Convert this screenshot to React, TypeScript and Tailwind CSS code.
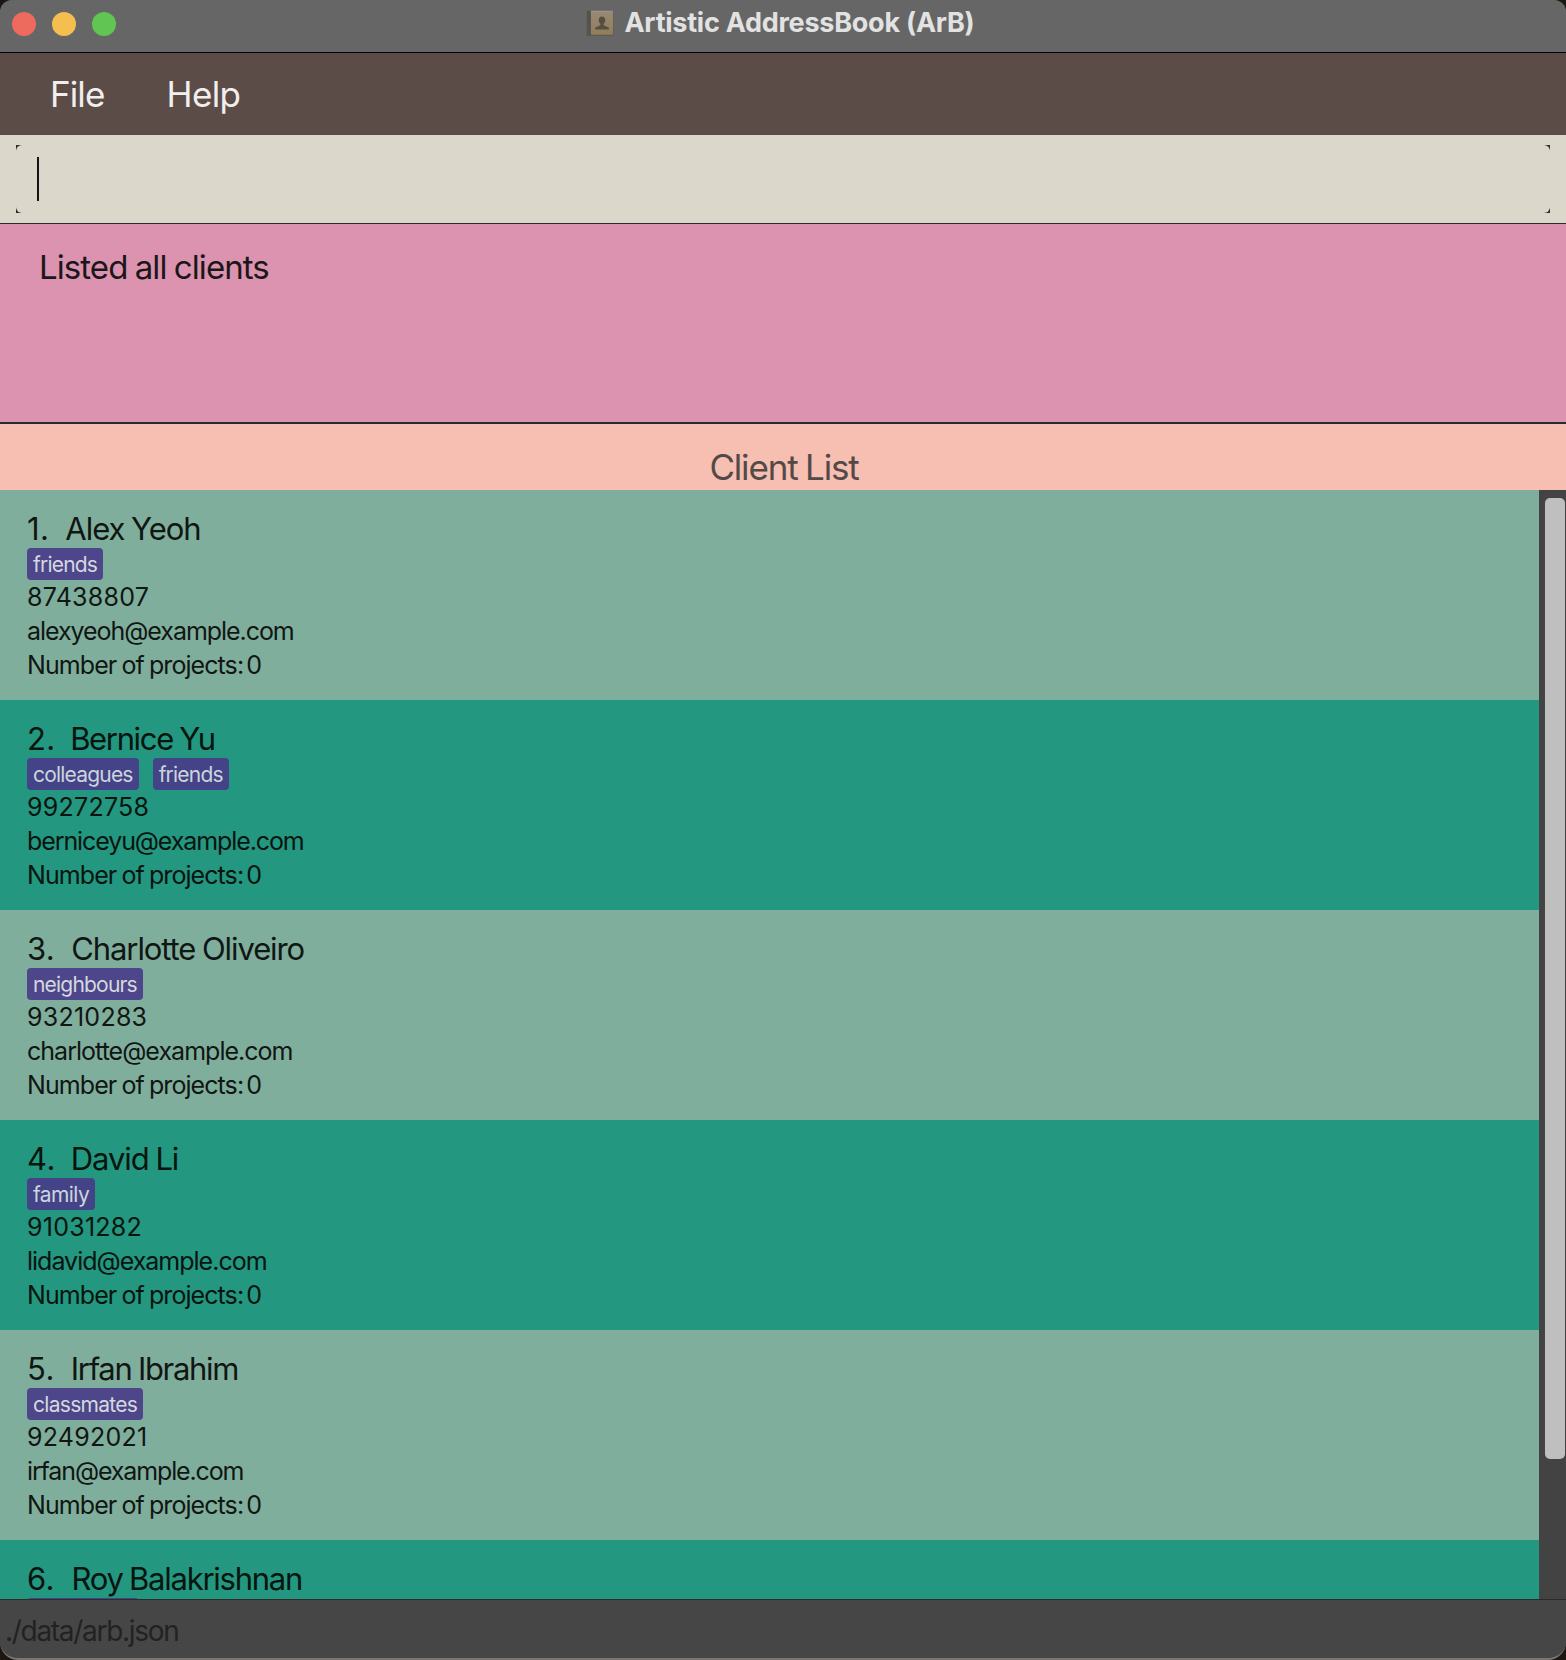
import React from "react";

type Tag = { label: string; spacing: string };

type Client = {
  name: string;
  nameGap: string;
  nameSpacing: string;
  tags: Tag[];
  phone?: string;
  email?: string;
  emailSpacing?: string;
};

const clients: Client[] = [
  { name: "Alex Yeoh", nameGap: "16px", nameSpacing: "-1.05px", tags: [{ label: "friends", spacing: "-0.8px" }], phone: "87438807", email: "alexyeoh@example.com", emailSpacing: "-1.05px" },
  { name: "Bernice Yu", nameGap: "14.5px", nameSpacing: "-1.34px", tags: [{ label: "colleagues", spacing: "-0.8px" }, { label: "friends", spacing: "-0.8px" }], phone: "99272758", email: "berniceyu@example.com", emailSpacing: "-1.1px" },
  { name: "Charlotte Oliveiro", nameGap: "16px", nameSpacing: "-1.09px", tags: [{ label: "neighbours", spacing: "-0.8px" }], phone: "93210283", email: "charlotte@example.com", emailSpacing: "-0.98px" },
  { name: "David Li", nameGap: "15px", nameSpacing: "-1.05px", tags: [{ label: "family", spacing: "-0.6px" }], phone: "91031282", email: "lidavid@example.com", emailSpacing: "-1px" },
  { name: "Irfan Ibrahim", nameGap: "16px", nameSpacing: "-1.3px", tags: [{ label: "classmates", spacing: "-0.7px" }], phone: "92492021", email: "irfan@example.com", emailSpacing: "-1.13px" },
  { name: "Roy Balakrishnan", nameGap: "16.5px", nameSpacing: "-1.25px", tags: [{ label: "", spacing: "0px" }] },
];

function BookIcon() {
  return (
    <svg width="28" height="27" viewBox="0 0 28 27" className="mr-[10px] block">
      <defs>
        <linearGradient id="cover" x1="0" y1="0" x2="0" y2="1">
          <stop offset="0" stopColor="#978a75" />
          <stop offset="1" stopColor="#917d59" />
        </linearGradient>
      </defs>
      <rect x="0.5" y="0.5" width="27" height="25.5" rx="1.5" fill="#5d5a55" />
      <rect x="1" y="1" width="3.5" height="24.5" fill="#56534e" />
      <rect x="5" y="1" width="22" height="23.8" rx="0.8" fill="url(#cover)" />
      <rect x="5" y="0.7" width="22" height="1" fill="#a0988a" />
      <path
        d="M16 6.500c-2 0-3.300 1.500-3.300 3.600 0 1.700.8 2.900 1.700 3.700.2.900-.1 1.500-.9 1.900l-3 1.300c-1 .4-1.500 1-1.500 2.500h14c0-1.500-.5-2.100-1.500-2.500l-3-1.300c-.8-.4-1.100-1-.9-1.900.9-.8 1.700-2 1.700-3.700C19.300 8 18 6.500 16 6.500z"
        fill="#554e42"
      />
    </svg>
  );
}

function ClientCard({ client, index }: { client: Client; index: number }) {
  const odd = index % 2 === 1;
  return (
    <li className={`h-[210px] shrink-0 pt-5 pl-[27px] text-[25px] leading-[34px] ${odd ? "bg-[#23977f] text-[#07140f]" : "bg-[#80ae9c] text-[#101613]"}`}>
      <div className="flex h-[38px] text-[31px] leading-[38px] whitespace-pre [word-spacing:-1px]">
        <span className="tracking-[0.4px]">{index + 1}.</span>
        <span style={{ letterSpacing: client.nameSpacing, marginLeft: client.nameGap }}>{client.name}</span>
      </div>
      <div className="flex h-8 gap-[14px]">
        {client.tags.map((tag) => (
          <span
            key={tag.label}
            className={`h-8 rounded-[4px] text-[21px] leading-[34px] ${tag.label ? "px-[6px]" : "w-28"} ${odd ? "bg-[#444387] text-[#ccd5dc]" : "bg-[#4d468a] text-[#d5d8de]"}`}
            style={{ letterSpacing: tag.spacing }}
          >
            {tag.label}
          </span>
        ))}
      </div>
      {client.phone && (
        <>
          <div><span className="tracking-[0.25px]">{client.phone}</span></div>
          <div><span style={{ letterSpacing: client.emailSpacing }}>{client.email}</span></div>
          <div className="tracking-[-0.92px] [word-spacing:-1px]">
            Number of projects:<span className="-ml-[2px]"> 0</span>
          </div>
        </>
      )}
    </li>
  );
}

export default function App() {
  return (
    <div className="h-[1660px] w-[1566px] overflow-hidden bg-[#1c1712] font-['Inter',sans-serif]">
      <div className="relative flex h-full flex-col overflow-hidden rounded-t-[12px] rounded-b-[18px] bg-[#464646]">
        <header className="relative flex h-[53px] shrink-0 items-start justify-center border-b border-black bg-[#666666]">
          <div className="absolute top-3 left-3 flex gap-4">
            <span className="size-6 rounded-full bg-[#ed6a5e]" />
            <span className="size-6 rounded-full bg-[#f5bf4f]" />
            <span className="size-6 rounded-full bg-[#61c554]" />
          </div>
          <div className="flex items-center pt-[9px] pr-[5px]">
            <BookIcon />
            <h1 className="h-7 text-[27px] leading-7 font-bold tracking-[-0.25px] text-[#e2e2e2]">Artistic AddressBook (ArB)</h1>
          </div>
        </header>

        <nav className="flex h-[82px] shrink-0 bg-[#5b4c48] pt-[19px] pl-[50px] text-[35px] leading-[44px] tracking-[-0.9px] text-[#f1efee]">
          <span className="w-[116.5px]">File</span>
          <span className="tracking-[-0.6px]">Help</span>
        </nav>

        <div className="h-[89px] shrink-0 border-b border-[#2b2b2b] bg-[#dbd7ca] px-4 pt-[10px]">
          <div className="h-[68px] bg-[#2d2d2b]">
            <div className="h-full rounded-[6px] bg-[#dbd7ca] pt-3 pl-[21px]">
              <div className="h-11 w-[2px] bg-[#141414]" />
            </div>
          </div>
        </div>

        <div className="h-[200px] shrink-0 border-b-2 border-[#2b2b2b] bg-[#dc93b0] pt-[23px] pl-[39px] text-[33px] leading-10 text-[#1b1719]">
          <span className="tracking-[-0.93px] [word-spacing:-1px]">Listed all clients</span>
        </div>

        <div className="h-[66px] shrink-0 bg-[#f7beb2] pt-[23px] pl-[2px] text-center text-[35px] leading-10 text-[#534a47]">
          <span className="tracking-[-1.18px] [word-spacing:-1px]">Client List</span>
        </div>

        <main className="flex h-[1109px] shrink-0 overflow-hidden">
          <ul className="flex w-[1539px] flex-col overflow-hidden">
            {clients.map((client, i) => (
              <ClientCard key={client.name} client={client} index={i} />
            ))}
          </ul>
          <div className="w-[27px] bg-[#434343] pt-2 pl-[6px]">
            <div className="h-[961px] w-5 rounded-[5px] bg-[#bfbfbf]" />
          </div>
        </main>

        <footer className="h-[61px] shrink-0 border-t border-[#2b2b2b] pt-[11px] pl-[5px] text-[28px] leading-10 text-[#222222]">
          <span className="tracking-[-1.3px]">./data/arb.json</span>
        </footer>
        <div className="pointer-events-none absolute inset-0 rounded-t-[12px] rounded-b-[18px] border-b-2 border-[#7a7674]" />
      </div>
    </div>
  );
}
